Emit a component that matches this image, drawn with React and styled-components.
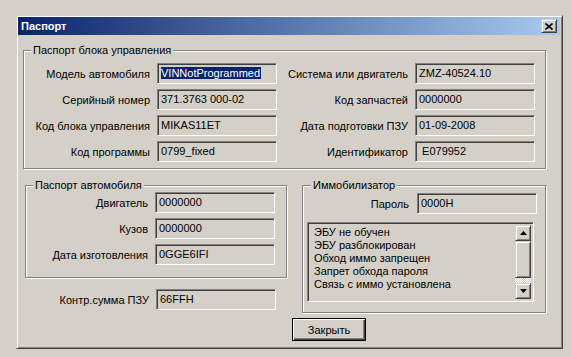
import React from 'react';
import styled, { createGlobalStyle } from 'styled-components';

const GlobalStyle = createGlobalStyle`
  html, body {
    margin: 0;
    padding: 0;
    background: #d4d0c8;
  }
  body {
    width: 571px;
    height: 357px;
    overflow: hidden;
    font-family: Tahoma, "Liberation Sans", Arial, sans-serif;
    font-size: 11px;
    color: #000;
  }
`;

const ecuRows = [
    ['Модель автомобиля', 'VINNotProgrammed', 'Система или двигатель', 'ZMZ-40524.10'],
    ['Серийный номер', '371.3763 000-02', 'Код запчастей', '0000000'],
    ['Код блока управления', 'MIKAS11ET', 'Дата подготовки ПЗУ', '01-09-2008'],
    ['Код программы', '0799_fixed', 'Идентификатор', ' E079952'],
];

const carRows = [
    ['Двигатель', '0000000'],
    ['Кузов', '0000000'],
    ['Дата изготовления', '0GGE6IFI'],
];

const immoStates = [
    'ЭБУ не обучен',
    'ЭБУ разблокирован',
    'Обход иммо запрещен',
    'Запрет обхода пароля',
    'Связь с иммо установлена',
];

const Arrow = ({ down }) => (
    <svg width="7" height="4" viewBox="0 0 7 4">
        <polygon points={down ? '0,0 7,0 3.5,4' : '0,4 7,4 3.5,0'} fill="#000" />
    </svg>
);

const App = () => {
    return (
        <>
            <GlobalStyle />
            <Window>
                <TitleBar>
                    <Title>Паспорт</Title>
                    <CloseButton>
                        <svg width="8" height="7" viewBox="0 0 8 7">
                            <path d="M0.5 0.5 L7.5 6.5 M7.5 0.5 L0.5 6.5" stroke="#000" strokeWidth="1.6" />
                        </svg>
                    </CloseButton>
                </TitleBar>

                <Body>
                    <Group $width={523} $pr={10} $pt={6} $pb={6} $ml={0}>
                        <Legend>Паспорт блока управления</Legend>
                        <EcuGrid>
                            {ecuRows.map(([l1, v1, l2, v2], i) => (
                                <React.Fragment key={i}>
                                    <Label>{l1}</Label>
                                    <Field>{i === 0 ? <Selected>{v1}</Selected> : v1}</Field>
                                    <Label>{l2}</Label>
                                    <Field>{v2}</Field>
                                </React.Fragment>
                            ))}
                        </EcuGrid>
                    </Group>

                    <Bottom>
                        <LeftColumn>
                            <Group $width={262} $pr={12} $pt={0} $pb={12} $ml={0}>
                                <Legend>Паспорт автомобиля</Legend>
                                <PairGrid $label={122}>
                                    {carRows.map(([l, v]) => (
                                        <React.Fragment key={l}>
                                            <Label>{l}</Label>
                                            <Field>{v}</Field>
                                        </React.Fragment>
                                    ))}
                                </PairGrid>
                            </Group>
                            <ChecksumRow $label={124}>
                                <Label>Контр.сумма ПЗУ</Label>
                                <Field>66FFH</Field>
                            </ChecksumRow>
                        </LeftColumn>

                        <RightColumn>
                            <Group $width={244} $pr={8} $pt={1} $pb={10} $ml={10} $pl={4}>
                                <Legend $offset={4}>Иммобилизатор</Legend>
                                <PasswordRow>
                                    <Label>Пароль</Label>
                                    <Field>0000H</Field>
                                </PasswordRow>
                                <ListBox>
                                    <ListItems>
                                        {immoStates.map((s) => (
                                            <li key={s}>{s}</li>
                                        ))}
                                    </ListItems>
                                    <ScrollBar>
                                        <ScrollButton $h={16}><Arrow /></ScrollButton>
                                        <ScrollButton $h={37} />
                                        <Track />
                                        <ScrollButton $h={16}><Arrow down /></ScrollButton>
                                    </ScrollBar>
                                </ListBox>
                            </Group>
                            <DefaultButton type="button">Закрыть</DefaultButton>
                        </RightColumn>
                    </Bottom>
                </Body>
            </Window>
        </>
    );
};

const raised = `
  border: 1px solid;
  border-color: #d4d0c8 #404040 #404040 #d4d0c8;
  box-shadow: inset 1px 1px 0 #fff, inset -1px -1px 0 #808080;
`;

const sunken = `
  border: 1px solid;
  border-color: #808080 #fff #fff #808080;
  box-shadow: inset 1px 1px 0 #404040, inset -1px -1px 0 #d4d0c8;
`;

const Window = styled.div`
  box-sizing: border-box;
  margin: 15px 0 0 16px;
  width: 547px;
  height: 334px;
  background: #d4d0c8;
  border: 1px solid;
  border-color: #d4d0c8 #404040 #404040 #d4d0c8;
  box-shadow: inset 1px 1px 0 #fff, inset -1px -1px 0 #808080;
  padding: 1px;
  display: flex;
  flex-direction: column;
`;

const TitleBar = styled.div`
  height: 18px;
  display: flex;
  align-items: center;
  justify-content: space-between;
  padding: 0 3px 0 3px;
  margin-right: 1px;
  background: linear-gradient(to right, #0a246a, #a6caf0);
`;

const Title = styled.span`
  color: #fff;
  font-weight: bold;
  font-size: 11px;
`;

const CloseButton = styled.div`
  box-sizing: border-box;
  width: 16px;
  height: 14px;
  background: #d4d0c8;
  ${raised}
  display: flex;
  align-items: center;
  justify-content: center;
`;

const Body = styled.div`
  padding: 9px 0 0 5px;
  display: flex;
  flex-direction: column;
`;

const Group = styled.fieldset`
  box-sizing: border-box;
  width: ${(p) => p.$width}px;
  margin: 0 0 0 ${(p) => p.$ml}px;
  padding: ${(p) => p.$pt}px ${(p) => p.$pr}px ${(p) => p.$pb}px ${(p) => p.$pl || 0}px;
  border: 1px solid #808080;
  box-shadow: 1px 1px 0 #fff, inset 1px 1px 0 #fff;
  min-width: 0;
`;

const Legend = styled.legend`
  margin-left: ${(p) => (p.$offset !== undefined ? p.$offset : 7)}px;
  padding: 0 2px;
  line-height: 13px;
  background: #d4d0c8;
`;

const EcuGrid = styled.div`
  display: grid;
  grid-template-columns: 126px 120px 124px 120px;
  column-gap: 7px;
  row-gap: 5px;
  align-items: center;
`;

const PairGrid = styled.div`
  display: grid;
  grid-template-columns: ${(p) => p.$label}px 120px;
  column-gap: 7px;
  row-gap: 5px;
  align-items: center;
`;

const ChecksumRow = styled(PairGrid)`
  margin-top: 11px;
`;

const Label = styled.div`
  text-align: right;
  white-space: nowrap;
`;

const Field = styled.div`
  box-sizing: border-box;
  width: 120px;
  height: 21px;
  padding: 2px 3px 0;
  line-height: 14px;
  white-space: pre;
  overflow: hidden;
  background: #d4d0c8;
  ${sunken}
`;

const Selected = styled.span`
  background: #0a246a;
  color: #fff;
  padding-right: 1px;
`;

const Bottom = styled.div`
  display: flex;
  gap: 5px;
  margin: 10px 0 0 2px;
`;

const LeftColumn = styled.div`
  display: flex;
  flex-direction: column;
`;

const RightColumn = styled.div`
  display: flex;
  flex-direction: column;
  align-items: flex-start;
`;

const PasswordRow = styled.div`
  display: flex;
  justify-content: flex-end;
  align-items: center;
  gap: 8px;
`;

const ListBox = styled.div`
  box-sizing: border-box;
  width: 227px;
  height: 80px;
  margin-top: 8px;
  display: flex;
  justify-content: space-between;
  background: #d4d0c8;
  ${sunken}
  padding: 2px;
`;

const ListItems = styled.ul`
  list-style: none;
  margin: 0;
  padding: 1px 0 0 4px;
  line-height: 13px;
  li {
    white-space: nowrap;
  }
`;

const ScrollBar = styled.div`
  width: 16px;
  display: flex;
  flex-direction: column;
`;

const ScrollButton = styled.div`
  box-sizing: border-box;
  height: ${(p) => p.$h}px;
  background: #d4d0c8;
  ${raised}
  display: flex;
  align-items: center;
  justify-content: center;
`;

const Track = styled.div`
  flex: 1;
  background: repeating-conic-gradient(#fff 0 25%, #d4d0c8 0 50%) 0 0 / 2px 2px;
`;

const DefaultButton = styled.button`
  box-sizing: border-box;
  margin-top: 5px;
  width: 74px;
  height: 23px;
  padding: 0;
  font: inherit;
  color: #000;
  background: #d4d0c8;
  border: 1px solid #000;
  box-shadow: inset 1px 1px 0 #fff, inset -1px -1px 0 #404040, inset -2px -2px 0 #808080;
`;

export default App;
